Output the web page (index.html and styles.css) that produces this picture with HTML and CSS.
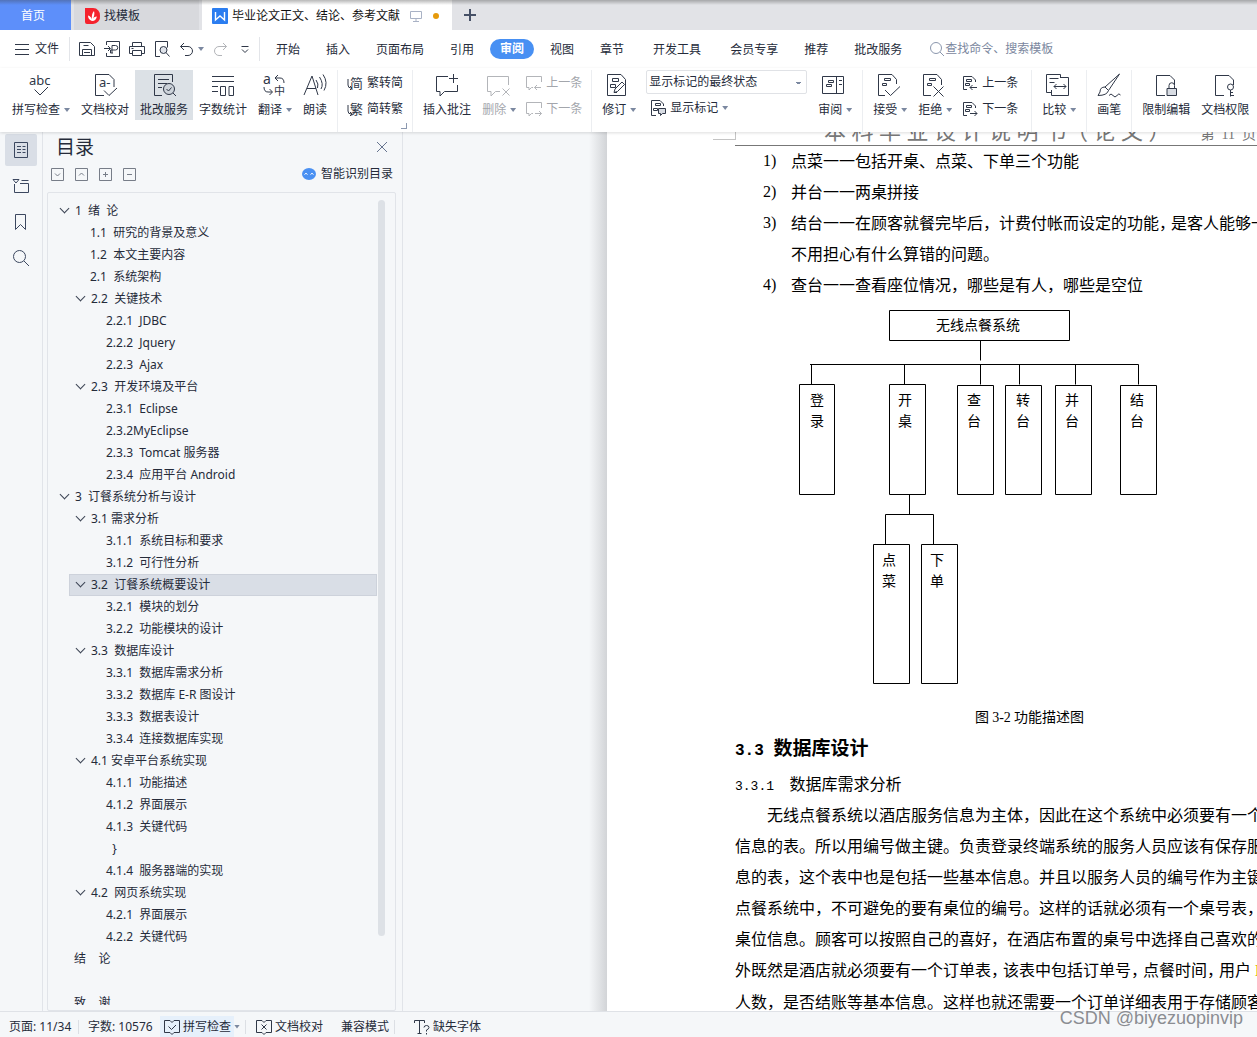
FILE: index.html
```html
<!DOCTYPE html>
<html lang="zh-CN">
<head>
<meta charset="utf-8">
<title>毕业论文正文、结论、参考文献</title>
<link rel="stylesheet" href="styles.css">
</head>
<body>
<svg class="defs" aria-hidden="true">
  <symbol id="doc" viewBox="0 0 24 24"><path d="M11 22.500H2.500V2.500H16l4.500 4.500V12"/></symbol>
  <symbol id="prev" viewBox="0 0 16 16"><path d="M5 14.500H1.500V1.500H10l3.500 3.500V7M4.500 4.500h5v2h-5zM3.500 8.500h4v2h-4zM15 12.500H8M10.500 10L8 12.500 10.500 15"/></symbol>
  <symbol id="next" viewBox="0 0 16 16"><path d="M5 14.500H1.500V1.500H10l3.500 3.500V7M4.500 4.500h5v2h-5zM3.500 8.500h4v2h-4zM8 12.500h7M12.500 10l2.500 2.500L12.500 15"/></symbol>
</svg>

<header class="tabs">
  <button class="tab home">首页</button>
  <button class="tab templates">
    <svg width="15" height="16" viewBox="0 0 15 16"><path d="M0 0h8a7 7 0 0 1 7 8 7 7 0 0 1-7 8H2a2 2 0 0 1-2-2z" fill="#f5222d"/><path d="M7 13C4 12 3 10 3 7.500c2 .5 3.500 2 4 4C6.500 8 7 5 9 3c1 2.500 0 6-1.200 8 .7-1.500 2-2.500 4-2.500C11.500 11 10 13 7 13z" fill="#fff"/></svg>
    找模板
  </button>
  <button class="tab current">
    <svg width="16" height="16" viewBox="0 0 16 16"><rect width="16" height="16" rx="1" fill="#2b7df0"/><path d="M3.500 4v8L8 8l4.500 4V4" fill="none" stroke="#fff" stroke-width="1.400"/></svg>
    <span class="title">毕业论文正文、结论、参考文献</span>
    <svg class="screen" width="12" height="12" viewBox="0 0 12 12"><path d="M.5 1.500h11v7H.5zM6 8.500v2.500M3 11.500h6"/></svg>
    <i class="dot"></i>
  </button>
  <button class="add" aria-label="新建"><svg width="12" height="12" viewBox="0 0 12 12"><path d="M6 0v12M0 6h12"/></svg></button>
</header>

<nav class="menu">
  <button class="file"><svg width="14" height="12" viewBox="0 0 14 12"><path d="M0 1.500h14M0 6.500h14M0 11.500h14"/></svg>文件</button>
  <div class="quick">
    <button aria-label="保存"><svg width="16" height="16" viewBox="0 0 16 16"><path d="M.5 1.500h11l4 4v9H.5zM3.500 14.500v-6h9v6M4.500 4.500h5M5 11.500h6"/></svg></button>
    <button aria-label="输出为PDF"><svg width="16" height="16" viewBox="0 0 16 16"><path d="M2.500 4V.5h13v15h-13V12M0 7.500h6M4 5l2.500 2.500L4 10M8 12V4.500h3.500a2 2 0 0 1 0 4.500H6.500v3H9"/></svg></button>
    <button aria-label="打印"><svg width="16" height="16" viewBox="0 0 16 16"><path d="M3.500 5V1.500h9V5M3 12.500H.5v-7h15v7H13M3.500 9.500h9v5h-9zM2.500 7.500h2"/></svg></button>
    <button aria-label="打印预览"><svg width="16" height="16" viewBox="0 0 16 16"><path d="M6 15.500H1.500V.5h12v6"/><circle cx="9.500" cy="9" r="3.500" fill="#dfe3ea"/><path d="M12 11.500l3.500 4"/></svg></button>
    <button aria-label="撤销"><svg width="16" height="16" viewBox="0 0 16 16"><path d="M5 2L1.500 5.500 5 9M1.500 5.500H9a4.500 4.500 0 0 1 0 9H6"/></svg></button>
    <i class="caret"></i>
    <button class="off" aria-label="恢复"><svg width="16" height="16" viewBox="0 0 16 16"><path d="M11 2l3.500 3.500L11 9M14.500 5.500H7a4.500 4.500 0 0 0 0 9h3"/></svg></button>
    <button class="more" aria-label="更多"><svg width="10" height="10" viewBox="0 0 10 10"><path d="M1.500 2.500h7M2 5.500l3 3 3-3"/></svg></button>
  </div>
  <div class="items">
    <button>开始</button><button>插入</button><button>页面布局</button><button>引用</button><button class="on"><span>审阅</span></button><button>视图</button><button>章节</button><button class="apart">开发工具</button><button class="apart">会员专享</button><button>推荐</button><button>批改服务</button>
  </div>
  <label class="search"><svg width="16" height="16" viewBox="0 0 16 16"><circle cx="7" cy="7" r="5.500"/><path d="M11 11l4 4"/></svg><input placeholder="查找命令、搜索模板" aria-label="查找命令、搜索模板"></label>
</nav>

<section class="ribbon">
  <button class="big"><svg width="24" height="24" viewBox="0 0 24 24"><text x="1" y="12" font-size="13">abc</text><path d="M6.500 16.500l5.500 5.500 8-8"/></svg><span>拼写检查<i class="caret"></i></span></button>
  <button class="big"><svg width="24" height="24" viewBox="0 0 24 24"><path d="M11 22.500H2.500V1.500H16l5 5V14M11 17.500l5 5L24 15"/><text x="6" y="14" font-size="13">a-</text></svg><span>文档校对</span></button>
  <button class="big active"><svg width="24" height="24" viewBox="0 0 24 24"><path d="M10 22.500H2.500V1.500h18V9M6 6.500h11M6 10.500h9M6 14.500h4"/><circle cx="17" cy="16" r="5.500" fill="#cdd3da"/><path d="M14.500 16l2 2 3-3.500M21 20l3 3"/></svg><span>批改服务</span></button>
  <button class="big"><svg width="24" height="24" viewBox="0 0 24 24"><path d="M1 3.500h22M1 8.500h22M1 13.500h6M1 18.500h6M9.500 13.500h5v9h-5zM18 13.500h4.500v9H18z"/></svg><span>字数统计</span></button>
  <button class="big"><svg width="24" height="24" viewBox="0 0 24 24"><text x="1" y="11" font-size="14">a</text><text x="12" y="22" font-size="11">中</text><path d="M16 2l-3 3 3 3M13 5h5q4 0 4 5M2 14q0 5 4 5h4M7.500 16l3 3-3 3"/></svg><span>翻译<i class="caret"></i></span></button>
  <button class="big"><svg width="24" height="24" viewBox="0 0 24 24"><path d="M1 22L9 3l6 19M4 15.500h9M13 7q3 4 1.500 8M16.500 4q4.500 7 1.500 12M20 1.500q5.500 8 1 16"/></svg><span>朗读</span></button>
  <i class="sep"></i>
  <div class="stack launcher">
    <button class="small"><svg width="16" height="16" viewBox="0 0 16 16"><text x="3" y="13" font-size="13">简</text><path d="M1 4v6q0 3 3 3M3 11l2 2-2 2"/></svg>繁转简</button>
    <button class="small"><svg width="16" height="16" viewBox="0 0 16 16"><text x="3" y="13" font-size="13">繁</text><path d="M1 4v6q0 3 3 3M3 11l2 2-2 2"/></svg>简转繁</button>
  </div>
  <i class="sep"></i>
  <button class="big"><svg width="24" height="24" viewBox="0 0 24 24"><path d="M13 3.500H1.500v15H5V23l4.500-4.500h13V12M18.500 1v9M14 5.500h9"/></svg><span>插入批注</span></button>
  <button class="big off"><svg width="24" height="24" viewBox="0 0 24 24"><path d="M22.500 12V3.500h-21v15H5V23l4.500-4.500H14M16.500 15.500l7 7M23.500 15.500l-7 7"/></svg><span>删除<i class="caret"></i></span></button>
  <div class="stack">
    <button class="small off"><svg width="16" height="16" viewBox="0 0 16 16"><path d="M15.500 7V1.500H.5v11H3V15l2.500-2.500H7M15 12.500H8.500M11 10l-2.500 2.500L11 15"/></svg>上一条</button>
    <button class="small off"><svg width="16" height="16" viewBox="0 0 16 16"><path d="M15.500 7V1.500H.5v11H3V15l2.500-2.500H7M9 12.500h6.500M13 10l2.500 2.500L13 15"/></svg>下一条</button>
  </div>
  <i class="sep"></i>
  <button class="big"><svg width="24" height="24" viewBox="0 0 24 24"><path d="M1.500 1.500H15l4.500 5v16h-18zM6.500 5.500h6v3h-6zM4.500 11.500h5v3h-5zM8 19.500l1-3.500 7-7 2.500 2.500-7 7zM8 19.500h3"/></svg><span>修订<i class="caret"></i></span></button>
  <div class="stack markup">
    <select aria-label="显示状态"><option>显示标记的最终状态</option></select>
    <button class="small"><svg width="16" height="16" viewBox="0 0 16 16"><path d="M6 15.500H1.500V.5H10l3.500 3.500V6M5.500 3.500h5v2h-5zM3.500 8.500h4v2h-4z"/><path d="M8.500 8.500h7v5h-3l-2 2v-2h-2z" fill="#d8dce3"/></svg>显示标记<i class="caret"></i></button>
  </div>
  <button class="big"><svg width="24" height="24" viewBox="0 0 24 24"><path d="M.5 3.500h21v17H.5zM14.500 3.500v17M6.500 7.500h5v2h-5zM4.500 11.500h5v2h-5zM17 7.500h3M17 11.500h3"/></svg><span>审阅<i class="caret"></i></span></button>
  <i class="sep"></i>
  <button class="big"><svg width="24" height="24" viewBox="0 0 24 24"><path d="M8 22.500H1.500V1.500H15l4.500 5V11M7.500 5.500h6v2h-6zM5.500 10.500h4v2h-4zM8 17l5.500 5.500L23 13.500"/></svg><span>接受<i class="caret"></i></span></button>
  <button class="big"><svg width="24" height="24" viewBox="0 0 24 24"><path d="M9 22.500H1.500V1.500H15l4.500 5V12M7.500 5.500h6v2h-6zM5.500 10.500h4v2h-4zM11.500 13.500l10 10M21.500 13.500l-10 10"/></svg><span>拒绝<i class="caret"></i></span></button>
  <div class="stack last">
    <button class="small"><svg width="16" height="16"><use href="#prev"/></svg>上一条</button>
    <button class="small"><svg width="16" height="16"><use href="#next"/></svg>下一条</button>
  </div>
  <i class="sep"></i>
  <button class="big"><svg width="24" height="24" viewBox="0 0 24 24"><path d="M14.500 5V1.500h-14v18h5M3.500 5.500h9M3.500 9.500h5M14.500 4.500h8v18h-17V17M8 13.500h12M10.500 11L8 13.500l2.500 2.500M17.500 11l2.500 2.500-2.500 2.500"/></svg><span>比较<i class="caret"></i></span></button>
  <i class="sep"></i>
  <button class="big"><svg width="24" height="24" viewBox="0 0 24 24"><path d="M22.500 1L8 14l3.500 3.500zM8 14q-5 0-5 5l-2 3.500q9 0 10.500-5M12 22.500q2-3 4 0t4 0 3.500-.5"/></svg><span>画笔</span></button>
  <i class="sep"></i>
  <button class="big"><svg width="24" height="24" viewBox="0 0 24 24"><use href="#doc"/><path d="M15 15v-2.500a2.500 2.500 0 0 1 5.500 0V15"/><path d="M13 15.500h9.500v7H13z" fill="#d8dce3"/></svg><span>限制编辑</span></button>
  <button class="big"><svg width="24" height="24" viewBox="0 0 24 24"><use href="#doc"/><circle cx="17.500" cy="14" r="3"/><path d="M17.500 17v6.500M17.500 19.500H20M17.500 22.500H21"/></svg><span>文档权限</span></button>
</section>

<main class="work">
  <aside class="rail">
    <button class="on" aria-label="目录"><svg width="16" height="16" viewBox="0 0 16 16"><path d="M1.500.5h13v15h-13zM4 4.500h4M9.500 4.500h3M4 7.500h4M9.500 7.500h3M4 10.500h4M9.500 10.500h3"/></svg></button>
    <button aria-label="章节"><svg width="16" height="16" viewBox="0 0 16 16"><path d="M1.500 6v8.500h14v-9H7M8.500 2.500h7M0 1.500h6L3 5z"/></svg></button>
    <button aria-label="书签"><svg width="16" height="16" viewBox="0 0 16 16"><path d="M2.500.5h10v15l-5-5-5 5z"/></svg></button>
    <button aria-label="查找"><svg width="16" height="16" viewBox="0 0 16 16"><circle cx="6.500" cy="6.500" r="6"/><path d="M11 11l5 5"/></svg></button>
  </aside>

  <section class="outline">
    <div class="head"><h2>目录</h2><button aria-label="关闭"><svg width="10" height="10" viewBox="0 0 10 10"><path d="M0 0l10 10M10 0L0 10"/></svg></button></div>
    <div class="tools">
      <button aria-label="展开"><svg width="13" height="13" viewBox="0 0 13 13"><path d="M.5.5h12v12H.5zM4 5.500L6.500 8 9 5.500"/></svg></button>
      <button aria-label="收起"><svg width="13" height="13" viewBox="0 0 13 13"><path d="M.5.5h12v12H.5zM4 7.500L6.500 5 9 7.500"/></svg></button>
      <button aria-label="增加"><svg width="13" height="13" viewBox="0 0 13 13"><path d="M.5.5h12v12H.5zM4 6.500h5M6.500 4v5"/></svg></button>
      <button aria-label="减少"><svg width="13" height="13" viewBox="0 0 13 13"><path d="M.5.5h12v12H.5zM4 6.500h5"/></svg></button>
      <button class="smart"><svg width="14" height="12" viewBox="0 0 14 12"><ellipse cx="7" cy="6" rx="7" ry="6" fill="#4a90f2"/><path d="M2.500 6.500Q4 4 5.500 6.500M8.500 6.500Q10 4 11.500 6.500" fill="none" stroke="#fff"/></svg>智能识别目录</button>
    </div>
    <div class="tree">
      <ul>
        <li class="l1 open">1  绪  论</li>
        <li class="l2">1.1  研究的背景及意义</li>
        <li class="l2">1.2  本文主要内容</li>
        <li class="l2">2.1  系统架构</li>
        <li class="l2 open">2.2  关键技术</li>
        <li class="l3">2.2.1  JDBC</li>
        <li class="l3">2.2.2  Jquery</li>
        <li class="l3">2.2.3  Ajax</li>
        <li class="l2 open">2.3  开发环境及平台</li>
        <li class="l3">2.3.1  Eclipse</li>
        <li class="l3">2.3.2MyEclipse</li>
        <li class="l3">2.3.3  Tomcat 服务器</li>
        <li class="l3">2.3.4  应用平台 Android</li>
        <li class="l1 open">3  订餐系统分析与设计</li>
        <li class="l2 open">3.1 需求分析</li>
        <li class="l3">3.1.1  系统目标和要求</li>
        <li class="l3">3.1.2  可行性分析</li>
        <li class="l2 open on">3.2  订餐系统概要设计</li>
        <li class="l3">3.2.1  模块的划分</li>
        <li class="l3">3.2.2  功能模块的设计</li>
        <li class="l2 open">3.3  数据库设计</li>
        <li class="l3">3.3.1  数据库需求分析</li>
        <li class="l3">3.3.2  数据库 E-R 图设计</li>
        <li class="l3">3.3.3  数据表设计</li>
        <li class="l3">3.3.4  连接数据库实现</li>
        <li class="l2 open">4.1 安卓平台系统实现</li>
        <li class="l3">4.1.1  功能描述</li>
        <li class="l3">4.1.2  界面展示</li>
        <li class="l3">4.1.3  关键代码</li>
        <li class="l3">  }</li>
        <li class="l3">4.1.4  服务器端的实现</li>
        <li class="l2 open">4.2  网页系统实现</li>
        <li class="l3">4.2.1  界面展示</li>
        <li class="l3">4.2.2  关键代码</li>
        <li class="l1">结    论</li>
        <li class="l1"> </li>
        <li class="l1">致    谢</li>
      </ul>
      <div class="bar"></div>
    </div>
  </section>

  <section class="canvas">
    <article class="page">
      <div class="running"><span class="name">本 科 毕 业 设 计 说 明 书（ 论 文 ）</span><span>第  11  页</span></div>
      <ol class="list">
        <li><b>1)</b><span>点菜一一包括开桌、点菜、下单三个功能</span></li>
        <li><b>2)</b><span>并台一一两桌拼接</span></li>
        <li><b>3)</b><span>结台一一在顾客就餐完毕后，计费付帐而设定的功能<i>，</i>是客人能够一<br>不用担心有什么算错的问题。</span></li>
        <li><b>4)</b><span>查台一一查看座位情况，哪些是有人，哪些是空位</span></li>
      </ol>
      <svg class="chart" width="440" height="400" viewBox="0 0 440 400" role="img" aria-label="功能描述图">
        <path d="M154.500 10.500h180v30h-180zM245.500 40.500v20M75 64.500h328.500M76.500 64.500v20M169.500 64.500v20M245.500 64.500v20M284.500 64.500v20M340.500 64.500v20M403.500 64.500v20M64.500 84.500h35v110h-35zM154.500 84.500h36v110h-36zM222.500 85.500h36v109h-36zM270.500 85.500h36v109h-36zM320.500 85.500h36v109h-36zM385.500 85.500h36v109h-36zM174.500 194.500v20M150.500 244.500v-30h48v30M138.500 244.500h36v139h-36zM186.500 244.500h36v139h-36z"/>
        <g><text x="243" y="30">无线点餐系统</text>
        <text x="82" y="105">登</text><text x="82" y="126">录</text>
        <text x="170" y="105">开</text><text x="170" y="126">桌</text>
        <text x="239" y="105">查</text><text x="239" y="126">台</text>
        <text x="288" y="105">转</text><text x="288" y="126">台</text>
        <text x="337" y="105">并</text><text x="337" y="126">台</text>
        <text x="402" y="105">结</text><text x="402" y="126">台</text>
        <text x="154" y="265">点</text><text x="154" y="286">菜</text>
        <text x="202" y="265">下</text><text x="202" y="286">单</text></g>
      </svg>
      <p class="caption">图 <b>3-2</b> 功能描述图</p>
      <h3><b>3.3 </b>数据库设计</h3>
      <h4><b>3.3.1  </b>数据库需求分析</h4>
      <p class="body">无线点餐系统以酒店服务信息为主体，因此在这个系统中必须要有一个<br>信息的表。所以用编号做主键。负责登录终端系统的服务人员应该有保存服<br>息的表，这个表中也是包括一些基本信息。并且以服务人员的编号作为主键<br>点餐系统中，不可避免的要有桌位的编号。这样的话就必须有一个桌号表，<br>桌位信息。顾客可以按照自己的喜好，在酒店布置的桌号中选择自己喜欢的<br>外既然是酒店就必须要有一个订单表<i>，</i>该表中包括订单号<i>，</i>点餐时间<i>，</i>用户 <mark>ID</mark><br>人数，是否结账等基本信息。这样也就还需要一个订单详细表用于存储顾客</p>
    </article>
  </section>
</main>

<footer class="status">
  <span class="pages">页面: 11/34</span><i></i><span class="words">字数: 10576</span>
  <button class="spell"><svg width="16" height="16" viewBox="0 0 16 16"><path d="M6 1.500H.5v12H6l2 2 2-2h5.500v-12H10l-2 2zM4.500 7.500l3 3L12 6"/></svg>拼写检查</button>
  <span class="caret"></span><i></i>
  <button class="proof"><svg width="16" height="16" viewBox="0 0 16 16"><path d="M6 1.500H.5v12H6l2 2 2-2h5.500v-12H10l-2 2zM5.500 5.500l5 5M10.500 5.500l-5 5"/></svg>文档校对</button>
  <span class="mode">兼容模式</span><i></i>
  <button class="fonts"><svg width="16" height="16" viewBox="0 0 16 16"><path d="M.5 4V1.500h10V4M5.500 1.500v13M3.500 14.500h4M10 8.500q0-2 2.500-2t2.500 2q0 1.500-2.500 2.500v1.500M12.500 14v1.500"/></svg>缺失字体</button>
</footer>
<div class="watermark">CSDN @biyezuopinvip</div>
</body>
</html>
```

FILE: styles.css
```css
* { box-sizing: border-box; }
body {
  margin: 0; height: 100vh; display: flex; flex-direction: column; overflow: hidden; position: relative;
  font: 12px/16px "Noto Sans", "Noto Sans CJK SC", sans-serif; color: #252b3a; background: #f5f7f9;
}
button, input, select { font: inherit; color: inherit; border: 0; background: none; padding: 0; margin: 0; }
button { display: flex; align-items: center; white-space: nowrap; flex: none; }
svg { flex: none; display: block; fill: none; stroke: #303848; overflow: visible; }
svg text { fill: #303848; stroke: none; }
.defs { position: absolute; width: 0; height: 0; }
.caret { flex: none; width: 6px; height: 4px; background: #7b88a0; clip-path: polygon(0 0, 100% 0, 50% 100%); }
.off { color: #a3a6ac; }
.off svg { stroke: #b3b5b9; }

/* window tabs */
.tabs { flex: none; height: 30px; display: flex; gap: 3px; background: linear-gradient(#a6a7a9, #e2e3e7 5px); }
.tab { height: 30px; padding-top: 2px; }
.home { width: 71px; justify-content: center; padding-right: 5px; color: #fff; background: linear-gradient(#5273b9, #5d8ffa 5px); }
.templates { width: 125px; padding-left: 11px; gap: 4px; background: linear-gradient(#a0a1a3, #d8d9dd 5px); }
.templates svg, .current > svg:first-child { stroke: none; }
.current { width: 250px; padding-left: 10px; gap: 4px; background: linear-gradient(#b8b8b8, #fff 5px); color: #111; }
.screen { margin: 0 4px 0 6px; stroke: #a9b2c5; }
.dot { width: 6px; height: 6px; border-radius: 50%; background: #e69a0b; margin-left: 3px; }
.add { padding-left: 9px; }
.add svg { stroke: #465066; stroke-width: 2; }

/* menu bar */
.menu { flex: none; height: 38px; display: flex; align-items: center; background: #fff; }
.file { padding-left: 15px; gap: 6px; width: 69px; }
.quick { display: flex; align-items: center; gap: 9px; width: 191px; height: 24px; padding-left: 9px; border: solid #e3e5e9; border-width: 0 1px; }
.quick .caret { margin: 0 -1px 0 -6px; }
.quick .more { margin-left: 3px; }
.items { display: flex; padding-left: 3px; }
.items button { padding: 2px 13px 0; height: 20px; }
.items .on { padding: 0 3px; }
.items .on span { line-height: 20px; padding: 0 10px; border-radius: 10px; background: #4890f3; color: #fff; font-weight: bold; }
.items .apart { margin-left: 3px; }
.search { display: flex; align-items: center; padding-left: 14px; flex: 1; }
.search svg { stroke: #8b97ad; }
.search input { width: 130px; outline: 0; }
.search input::placeholder { color: #7b879e; opacity: 1; }

/* ribbon */
.ribbon { flex: none; height: 64px; padding: 2px 0 0 7px; display: flex; gap: 1px; background: #fff; box-shadow: 0 1px 3px #0002; position: relative; z-index: 1; }
.big { height: 50px; padding: 3px 5px 0; flex-direction: column; gap: 5px; }
.big span { display: flex; align-items: center; }
.big .caret { margin: 0 0 0 4px; }
.big:has(.caret) > svg { margin-right: 2px; }
.active { background: #dce1e6; }
.sep { flex: none; width: 1px; height: 62px; margin: 0 4px; background: #eceef1; }
.stack { flex: none; display: flex; flex-direction: column; gap: 2px; padding-top: 1px; }
.small { height: 24px; padding: 0 4px; gap: 4px; }
.launcher { position: relative; }
.launcher::after { content: ""; position: absolute; right: 0; top: 53px; width: 5px; height: 5px; border: solid #8c99b0; border-width: 0 1px 1px 0; }
.last { margin-right: 4px; }
.markup { margin: 0 5px 0 4px; width: 161px; padding-top: 0; }
.markup select { height: 24px; padding: 0 2px; border: 1px solid #e0e2e6; border-radius: 2px; appearance: none; background: linear-gradient(#7b88a0, #7b88a0) no-repeat right 5px center / 5px 1px, linear-gradient(#7b88a0, #7b88a0) no-repeat right 6px top 12px / 3px 1px; }

/* side panels */
.work { flex: 1; min-height: 0; display: flex; }
.rail { flex: none; width: 43px; padding: 2px 5px; display: flex; flex-direction: column; gap: 4px; border-right: 1px solid #e1e4e9; }
.rail button { width: 32px; height: 32px; justify-content: center; border-radius: 2px; }
.rail .on { background: #d9dee6; }
.rail svg { stroke: #3c4860; }
.outline { flex: none; width: 360px; padding: 0 6px 0 4px; display: flex; flex-direction: column; border-right: 1px solid #e1e4e9; }
.head { display: flex; justify-content: space-between; align-items: center; height: 30px; padding: 0 9px; }
.head h2 { margin: 0; font-size: 19px; line-height: 28px; font-weight: 400; }
.head svg { stroke: #66748f; }
.tools { display: flex; align-items: center; gap: 11px; height: 24px; padding: 0 3px 0 4px; }
.tools svg { stroke: #777d88; }
.smart { margin-left: auto; gap: 5px; }
.smart svg { stroke: none; }
.tree { flex: 1; min-height: 0; margin-top: 6px; padding: 7px 10px 5px 11px; display: flex; border: 1px solid #e1e4e9; border-radius: 2px; }
.tree ul { flex: 1; margin: 0; padding: 0 1px 0 10px; list-style: none; overflow: hidden; }
.tree li { line-height: 20px; height: 22px; border: 1px solid transparent; white-space: pre; }
.l1 { padding-left: 4px; }
.l2 { padding-left: 20px; }
.l3 { padding-left: 36px; }
.tree .on { background: #d9dee6; border-color: #cdd2db; }
.open::before { content: ""; display: inline-block; width: 6px; height: 6px; margin: 0 7px 3px -13px; border: solid #3c4454; border-width: 0 1px 1px 0; transform: rotate(45deg); }
.bar { width: 7px; height: 736px; border-radius: 4px; background: #dde1e6; }

/* document */
.canvas { flex: 1; min-width: 0; overflow: hidden; padding-left: 204px; background: linear-gradient(90deg, #f5f7f9 186px, #d2d4d7 204px); }
.page { min-width: 794px; min-height: 100%; padding-left: 128px; background: #fff; color: #000; font-family: "Noto Sans CJK SC", sans-serif; white-space: nowrap; font-size: 16px; line-height: 31px; position: relative; }
.page b { font-family: "Liberation Serif", serif; font-weight: 400; }
.page i { font-style: normal; margin-right: -4px; }
.page::before { content: ""; position: absolute; left: 106px; top: 0; width: 22px; height: 7px; border: solid #c4c4c4; border-width: 0 1px 1px 0; }
.running { height: 14px; border-bottom: 1px solid #777; padding-left: 89px; display: flex; align-items: flex-end; gap: 30px; font: 14px/20px "Liberation Serif", "Noto Sans CJK SC", serif; color: #777; white-space: pre; }
.running .name { font-size: 22px; line-height: 26px; }
.list { margin: -1px 0 0; padding: 0 0 0 28px; list-style: none; }
.list li { display: flex; }
.list b { width: 28px; }
.chart { display: block; stroke: #000; }
.chart text { fill: #000; font-size: 14px; text-anchor: middle; }
.caption { margin: 0; padding-left: 240px; font-size: 14px; line-height: 32px; }
.page h3, .page h4 { margin: 0; white-space: pre; }
.page h3 { font-size: 19px; line-height: 26px; }
.page h4 { font-size: 16px; line-height: 46px; font-weight: 400; }
.page h3 b { font: bold 16px "Liberation Mono", monospace; }
.page h4 b { font: 13px "Liberation Mono", monospace; }
.body { margin: -7px 0 0; text-indent: 32px; }
.body mark { background: none; color: #d9b600; font-family: "Liberation Serif", serif; }

/* status bar */
.status { flex: none; height: 26px; display: flex; align-items: center; padding: 4px 0 0 9px; border-top: 1px solid #dfe2e7; background: #f5f7f9; white-space: nowrap; position: relative; z-index: 1; }
.status > i { width: 1px; height: 14px; background: #dcdfe4; }
.status button { gap: 3px; height: 22px; }
.pages { width: 69px; }
.words { width: 81px; padding-left: 9px; }
.status .spell { padding: 0 4px; width: 74px; background: #e6f0fb; }
.status .caret { margin: 0 5px 0 0; }
.status .proof { padding-left: 10px; width: 95px; }
.mode { width: 53px; }
.status .fonts { padding-left: 19px; }
.watermark { position: absolute; z-index: 2; right: 14px; bottom: 8px; font: 18px/22px "Liberation Sans", sans-serif; color: #8b8d92; }
```
